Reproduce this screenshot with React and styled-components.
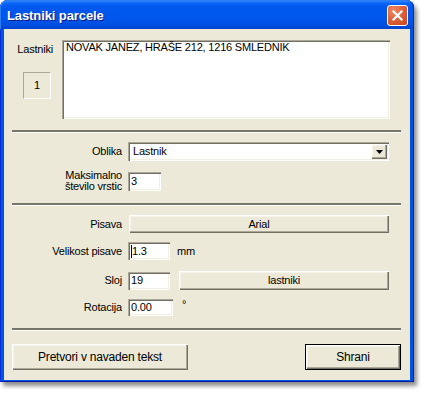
import React from 'react';
import styled, { createGlobalStyle } from 'styled-components';

const Global = createGlobalStyle`
  html, body { margin: 0; padding: 0; background: #ffffff; }
  body { font-family: "Liberation Sans", Arial, sans-serif; }
  * { box-sizing: border-box; }
`;

const Page = styled.div`
  width: 426px;
  height: 393px;
`;

const Window = styled.div`
  width: 414px;
  height: 382px;
  display: flex;
  flex-direction: column;
  background: #0054e3;
  border-radius: 8px 8px 0 0;
  box-shadow: inset 1px 0 #0831d9, inset -1px 0 #001ea0, inset 0 -1px #001ea0,
    3px 4px 4px rgba(0, 0, 0, 0.45);
`;

const TitleBar = styled.div`
  height: 29px;
  flex: none;
  display: flex;
  align-items: center;
  justify-content: space-between;
  padding: 0 6px 0 7px;
  border-radius: 8px 8px 0 0;
  background: linear-gradient(180deg, #3d95ff 0px, #0a66f8 3px, #0058ee 7px, #0056eb 18px, #0050e0 25px, #0042cb 29px);
  box-shadow: inset 1px 1px #2f7cf5, inset -1px 0 #0029b8;
`;

const Title = styled.span`
  color: #ffffff;
  font: bold 13px/16px "Liberation Sans", Arial, sans-serif;
  letter-spacing: -0.1px;
  text-shadow: 1px 1px #0a1883;
  padding-top: 2px;
`;

const CloseButton = styled.div`
  width: 21px;
  height: 21px;
  margin-top: 2px;
  border: 1px solid #ffffff;
  border-radius: 3px;
  background: radial-gradient(circle at 30% 25%, #f08a63 0%, #e0623a 45%, #c8461e 100%);
  display: flex;
  align-items: center;
  justify-content: center;
`;

const Client = styled.div`
  flex: 1;
  margin: 0 4px 5px 4px;
  background: #ece9d8;
  padding: 11px 9px 10px 8px;
  display: flex;
  flex-direction: column;
  color: #000000;
  font-size: 11px;
  line-height: 13px;
  letter-spacing: -0.2px;
`;

const TopSection = styled.div`
  display: flex;
`;

const LeftCol = styled.div`
  width: 50px;
  display: flex;
  flex-direction: column;
`;

const TopLabel = styled.div`
  margin-top: 3px;
  padding-right: 9px;
  text-align: right;
`;

const CountBox = styled.div`
  width: 28px;
  height: 27px;
  margin: 16px 0 0 11px;
  border-top: 1px solid #aca899;
  border-left: 1px solid #aca899;
  border-bottom: 1px solid #ffffff;
  border-right: 1px solid #ffffff;
  display: flex;
  align-items: center;
  justify-content: center;
`;

const sunken = `
  background: #ffffff;
  box-shadow: inset 1px 1px #aca899, inset 2px 2px #716f64, inset -1px -1px #ffffff, inset -2px -2px #f1efe2;
`;

const raised = `
  background: #ece9d8;
  box-shadow: inset 1px 1px #ffffff, inset -1px -1px #716f64, inset -2px -2px #aca899, inset 2px 2px #f5f4ea;
`;

const Memo = styled.div`
  ${sunken}
  width: 328px;
  height: 79px;
  padding: 1px 4px 0 4px;
`;

const Separator = styled.div`
  height: 2px;
  margin-top: ${(p) => p.$top}px;
  background: #77766a;
  box-shadow: 0 1px #ffffff;
`;

const Row = styled.div`
  display: grid;
  grid-template-columns: 110px auto;
  column-gap: 6px;
  align-items: center;
  margin-top: ${(p) => p.$top}px;
`;

const Label = styled.div`
  text-align: right;
  line-height: ${(p) => (p.$multi ? '11px' : '13px')};
`;

const Field = styled.div`
  display: flex;
  align-items: center;
  gap: ${(p) => p.$gap || 0}px;
`;

const Select = styled.div`
  ${sunken}
  width: 261px;
  height: 19px;
  display: flex;
  align-items: center;
  justify-content: space-between;
  padding: 2px 2px 2px 5px;
`;

const ArrowButton = styled.div`
  ${raised}
  width: 16px;
  height: 15px;
  display: flex;
  align-items: center;
  justify-content: center;
`;

const Input = styled.div`
  ${sunken}
  width: ${(p) => p.$w}px;
  height: ${(p) => p.$h || 18}px;
  padding: 0 3px;
  display: flex;
  align-items: center;
`;

const Caret = styled.span`
  width: 1px;
  height: 13px;
  background: #000000;
  margin-right: 0px;
`;

const Button = styled.div`
  ${raised}
  width: ${(p) => p.$w}px;
  height: ${(p) => p.$h}px;
  display: flex;
  align-items: center;
  justify-content: center;
  margin-left: ${(p) => p.$ml || 0}px;
  ${(p) =>
    p.$default &&
    `
    border: 1px solid #000000;
  `}
`;

const Unit = styled.span`
  align-self: ${(p) => (p.$top ? 'flex-start' : 'center')};
  margin-top: ${(p) => (p.$top ? '-1px' : '0')};
`;

const BottomRow = styled.div`
  display: flex;
  justify-content: space-between;
  margin-top: 14px;
  font-size: 12px;
`;

export default function App() {
  return (
    <Page>
      <Global />
      <Window>
        <TitleBar>
          <Title>Lastniki parcele</Title>
          <CloseButton>
            <svg width="11" height="11" viewBox="0 0 11 11">
              <path d="M1.5 1.5 L9.5 9.5 M9.5 1.5 L1.5 9.5" stroke="#ffffff" strokeWidth="2.2" strokeLinecap="square" />
            </svg>
          </CloseButton>
        </TitleBar>
        <Client>
          <TopSection>
            <LeftCol>
              <TopLabel>Lastniki</TopLabel>
              <CountBox>1</CountBox>
            </LeftCol>
            <Memo>NOVAK JANEZ, HRAŠE 212, 1216 SMLEDNIK</Memo>
          </TopSection>
          <Separator $top={11} />
          <Row $top={10}>
            <Label>Oblika</Label>
            <Field>
              <Select>
                <span>Lastnik</span>
                <ArrowButton>
                  <svg width="7" height="4" viewBox="0 0 7 4">
                    <path d="M0 0 H7 L3.5 4 Z" fill="#000000" />
                  </svg>
                </ArrowButton>
              </Select>
            </Field>
          </Row>
          <Row $top={9}>
            <Label $multi>
              Maksimalno
              <br />
              število vrstic
            </Label>
            <Field>
              <Input $w={33} $h={19}>3</Input>
            </Field>
          </Row>
          <Separator $top={11} />
          <Row $top={10}>
            <Label>Pisava</Label>
            <Field>
              <Button $w={260} $h={18} $ml={1}>Arial</Button>
            </Field>
          </Row>
          <Row $top={9}>
            <Label>Velikost pisave</Label>
            <Field $gap={7}>
              <Input $w={42}>
                <Caret />
                1.3
              </Input>
              <Unit>mm</Unit>
            </Field>
          </Row>
          <Row $top={11}>
            <Label>Sloj</Label>
            <Field $gap={9}>
              <Input $w={42}>19</Input>
              <Button $w={210} $h={19}>lastniki</Button>
            </Field>
          </Row>
          <Row $top={9}>
            <Label>Rotacija</Label>
            <Field $gap={9}>
              <Input $w={45} $h={17}>0.00</Input>
              <Unit $top>°</Unit>
            </Field>
          </Row>
          <Separator $top={12} />
          <BottomRow>
            <Button $w={176} $h={26}>Pretvori v navaden tekst</Button>
            <Button $w={96} $h={26} $default>Shrani</Button>
          </BottomRow>
        </Client>
      </Window>
    </Page>
  );
}
